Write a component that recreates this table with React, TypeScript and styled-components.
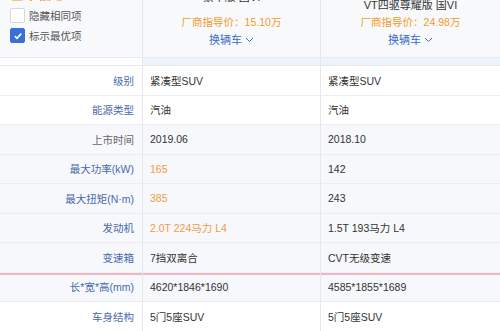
import styled, { createGlobalStyle } from "styled-components";

const GlobalStyle = createGlobalStyle`
  html, body {
    margin: 0;
    padding: 0;
    background: #fff;
    overflow: hidden;
  }
  body {
    font-family: "Liberation Sans", "Noto Sans CJK SC", sans-serif;
    font-size: 10.5px;
    color: #333;
  }
`;

const COLS = "143px 178px 179px";

type Spec = {
  label: string;
  link?: boolean;
  values: [string, string];
  best?: boolean;
  shaded?: boolean;
  divider?: boolean;
};

const specs: Spec[] = [
  { label: "级别", link: true, values: ["紧凑型SUV", "紧凑型SUV"] },
  { label: "能源类型", link: true, values: ["汽油", "汽油"] },
  { label: "上市时间", values: ["2019.06", "2018.10"], shaded: true },
  { label: "最大功率(kW)", link: true, values: ["165", "142"], best: true, shaded: true },
  { label: "最大扭矩(N·m)", link: true, values: ["385", "243"], best: true, shaded: true },
  { label: "发动机", link: true, values: ["2.0T 224马力 L4", "1.5T 193马力 L4"], best: true, shaded: true },
  { label: "变速箱", link: true, values: ["7挡双离合", "CVT无级变速"], shaded: true },
  { label: "长*宽*高(mm)", link: true, values: ["4620*1846*1690", "4585*1855*1689"], shaded: true, divider: true },
  { label: "车身结构", link: true, values: ["5门5座SUV", "5门5座SUV"] },
];

const cars = [
  { name: ["2019款 380TSI 四驱", "豪华版 国VI"], price: "15.10", nameGap: 9 },
  { name: ["2019款 1.5T CVT", "VT四驱尊耀版 国VI"], price: "24.98", nameGap: 1 },
];

const Viewport = styled.div`
  width: 500px;
  height: 331px;
  overflow: hidden;
`;

const Table = styled.div`
  margin-top: -30px;
`;

const Grid = styled.div`
  display: grid;
  grid-template-columns: ${COLS};
`;

const HeadLabel = styled.div`
  height: 87px;
  box-sizing: border-box;
  background: #f8f9fb;
  border-right: 1px solid #e4e7ed;
  padding: 15px 0 0 10px;
  display: flex;
  flex-direction: column;
`;

const Heading = styled.div`
  color: #f39a2b;
  font-size: 14px;
  font-weight: bold;
  line-height: 18px;
  margin-bottom: 5px;
`;

const CheckRow = styled.label`
  display: flex;
  align-items: center;
  gap: 4px;
  height: 15px;
  margin-bottom: 5px;
  color: #555;
`;

const Box = styled.span<{ $on?: boolean }>`
  width: 15px;
  height: 15px;
  box-sizing: border-box;
  border-radius: 2px;
  border: 1px solid ${(p) => (p.$on ? "#3a6fd8" : "#d4d7dd")};
  background: ${(p) => (p.$on ? "#3a6fd8" : "#fff")};
  display: flex;
  align-items: center;
  justify-content: center;
`;

const HeadCar = styled.div<{ $last?: boolean }>`
  height: 87px;
  box-sizing: border-box;
  background: #f8f9fb;
  border-right: ${(p) => (p.$last ? "none" : "1px solid #e4e7ed")};
  display: flex;
  flex-direction: column;
  justify-content: flex-end;
  align-items: center;
  padding-bottom: 9px;
`;

const CarName = styled.div<{ $gap: number }>`
  text-align: center;
  line-height: 16px;
  color: #333;
  font-size: 11px;
  margin-bottom: ${(p) => p.$gap}px;
`;

const Price = styled.div`
  color: #f39a2b;
  line-height: 16px;
  margin-bottom: 2px;
`;

const Change = styled.div`
  color: #3b6cc7;
  font-size: 11px;
  line-height: 16px;
  display: flex;
  align-items: center;
  gap: 3px;
`;

const Band = styled.div<{ $tint?: boolean }>`
  height: 7px;
  background: ${(p) => (p.$tint ? "#eef2f9" : "#fff")};
  border-top: 1px solid #e6e9ef;
  border-bottom: 1px solid #e6e9ef;
  border-right: 1px solid #e4e7ed;
  &:last-child {
    border-right: none;
  }
`;

const Cell = styled.div<{ $shaded?: boolean; $divider?: boolean }>`
  height: 29.5px;
  box-sizing: border-box;
  border-bottom: 1px solid #eaedf1;
  border-right: 1px solid #e4e7ed;
  background: ${(p) => (p.$shaded ? "#f6f8fb" : "#fff")};
  box-shadow: ${(p) => (p.$divider ? "inset 0 2px 0 #f2b6c3" : "none")};
  display: flex;
  align-items: center;
  white-space: nowrap;
  &:last-child {
    border-right: none;
  }
`;

const LabelCell = styled(Cell)<{ $link?: boolean }>`
  justify-content: flex-end;
  padding-right: 8px;
  color: ${(p) => (p.$link ? "#4a68ad" : "#666")};
`;

const ValueCell = styled(Cell)<{ $best?: boolean }>`
  padding-left: 7px;
  color: ${(p) => (p.$best ? "#f39a45" : "#333")};
`;

function Check() {
  return (
    <svg width="10" height="10" viewBox="0 0 10 10">
      <path d="M1.8 5.2 L4 7.3 L8.3 2.6" fill="none" stroke="#fff" strokeWidth="1.6" />
    </svg>
  );
}

function Chevron() {
  return (
    <svg width="9" height="6" viewBox="0 0 9 6">
      <path d="M1 1 L4.5 4.5 L8 1" fill="none" stroke="#3b6cc7" strokeWidth="1" />
    </svg>
  );
}

export default function App() {
  return (
    <Viewport>
      <GlobalStyle />
      <Table>
        <Grid>
          <HeadLabel>
            <Heading>基本信息</Heading>
            <CheckRow>
              <Box />
              隐藏相同项
            </CheckRow>
            <CheckRow>
              <Box $on>
                <Check />
              </Box>
              标示最优项
            </CheckRow>
          </HeadLabel>
          {cars.map((c, i) => (
            <HeadCar key={c.price} $last={i === cars.length - 1}>
              <CarName $gap={c.nameGap}>
                {c.name.map((l) => (
                  <div key={l}>{l}</div>
                ))}
              </CarName>
              <Price>厂商指导价：{c.price}万</Price>
              <Change>
                换辆车
                <Chevron />
              </Change>
            </HeadCar>
          ))}
        </Grid>
        <Grid>
          <Band />
          <Band $tint />
          <Band $tint />
        </Grid>
        {specs.map((s) => (
          <Grid key={s.label}>
            <LabelCell $link={s.link} $shaded={s.shaded} $divider={s.divider}>
              {s.label}
            </LabelCell>
            {s.values.map((v, i) => (
              <ValueCell
                key={i}
                $best={s.best && i === 0}
                $shaded={s.shaded}
                $divider={s.divider}
              >
                {v}
              </ValueCell>
            ))}
          </Grid>
        ))}
      </Table>
    </Viewport>
  );
}
